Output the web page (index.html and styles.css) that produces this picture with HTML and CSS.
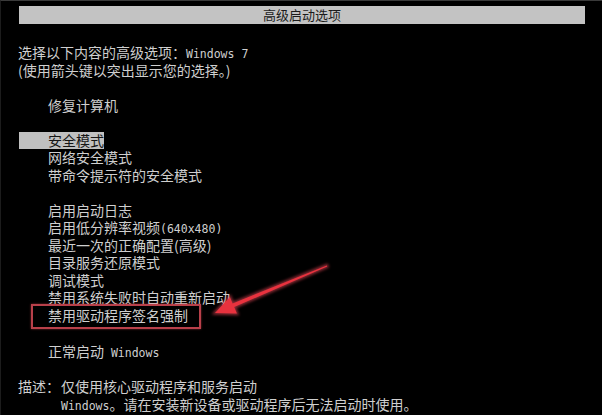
FILE: index.html
```html
<!DOCTYPE html>
<html lang="zh-CN">
<head>
<meta charset="utf-8">
<title>高级启动选项</title>
<link rel="stylesheet" href="styles.css">
</head>
<body>
<div class="screen">
  <div class="title">高级启动选项</div>

  <div class="intro">
    <div class="line">选择以下内容的高级选项：<span class="mono">Windows 7</span></div>
    <div class="line">(使用箭头键以突出显示您的选择。)</div>
  </div>

  <ul class="menu">
    <li class="blank"></li>
    <li class="item">修复计算机</li>
    <li class="blank"></li>
    <li class="item selected"><span class="hl">安全模式</span></li>
    <li class="item">网络安全模式</li>
    <li class="item">带命令提示符的安全模式</li>
    <li class="blank"></li>
    <li class="item">启用启动日志</li>
    <li class="item">启用低分辨率视频<span class="mono">(640x480)</span></li>
    <li class="item">最近一次的正确配置(高级)</li>
    <li class="item">目录服务还原模式</li>
    <li class="item">调试模式</li>
    <li class="item">禁用系统失败时自动重新启动</li>
    <li class="item marked">禁用驱动程序签名强制</li>
    <li class="blank"></li>
    <li class="item normal">正常启动<span class="mono"> Windows</span></li>
  </ul>

  <div class="desc">
    <div class="desc-label">描述：</div>
    <div class="desc-text">
      <div class="line">仅使用核心驱动程序和服务启动</div>
      <div class="line"><span class="mono">Windows</span>。请在安装新设备或驱动程序后无法启动时使用。</div>
    </div>
  </div>

  <svg class="arrow" width="602" height="415" viewBox="0 0 602 415" aria-hidden="true">
    <defs>
      <filter id="glow" x="-20%" y="-20%" width="140%" height="140%">
        <feGaussianBlur stdDeviation="1.6"/>
      </filter>
    </defs>
    <polygon class="arrow-glow" filter="url(#glow)" points="215,313 229.9,297 232.6,303.5 326.8,265.5 327.2,266.5 234.2,307.1 236.9,313.6"/>
    <polygon class="arrow-body" points="215,313 229.9,297 232.6,303.5 326.8,265.5 327.2,266.5 234.2,307.1 236.9,313.6"/>
  </svg>
</div>
</body>
</html>
```

FILE: styles.css
```css
html, body {
  margin: 0;
  padding: 0;
  background: #000;
}

body {
  width: 602px;
  height: 415px;
  overflow: hidden;
  font-family: "Noto Sans CJK SC", "Noto Sans", sans-serif;
  color: #cfcfcf;
  font-size: 14px;
}

.screen {
  position: relative;
  height: 415px;
  box-sizing: border-box;
  border-top: 1px solid #3a3a3a;
  border-left: 1px solid #1c1c1c;
  padding-top: 5px;
}

.title {
  height: 18px;
  line-height: 18px;
  margin: 0 17px 0 18px;
  background: #c3c3c3;
  color: #1b1b1b;
  text-align: center;
  font-size: 13px;
}

.line {
  height: 17.5px;
  line-height: 17.5px;
  white-space: nowrap;
}

.mono {
  font-family: "DejaVu Sans Mono", "Liberation Mono", monospace;
  font-size: 11.5px;
}

.intro {
  margin-top: 20px;
  padding-left: 17px;
}

.menu {
  list-style: none;
  margin: 0;
  padding: 0;
}

.menu li {
  height: 17.5px;
  line-height: 17.5px;
  white-space: nowrap;
}

.item {
  padding-left: 47px;
}

.item.selected {
  padding-left: 18px;
}

.hl {
  display: inline-block;
  height: 17.5px;
  padding-left: 29px;
  background: #c0c0c0;
  color: #151515;
}

.item.marked {
  position: relative;
}

.item.marked::after {
  content: "";
  position: absolute;
  left: 30px;
  top: -3px;
  width: 166px;
  height: 21px;
  border: 2px solid #b8404a;
  box-shadow: 0 0 2px rgba(220, 70, 80, 0.6);
}

.item.normal {
  margin-top: 1.5px;
}

.desc {
  display: flex;
  margin-top: 17.5px;
  padding-left: 17px;
}

.desc-label {
  width: 43px;
  height: 17.5px;
  line-height: 17.5px;
}

.arrow {
  position: absolute;
  left: -1px;
  top: -1px;
  pointer-events: none;
}

.arrow-glow {
  fill: #ff5060;
  stroke: #ff5060;
  stroke-width: 3;
  opacity: 0.55;
}

.arrow-body {
  fill: #e8323e;
}
```
